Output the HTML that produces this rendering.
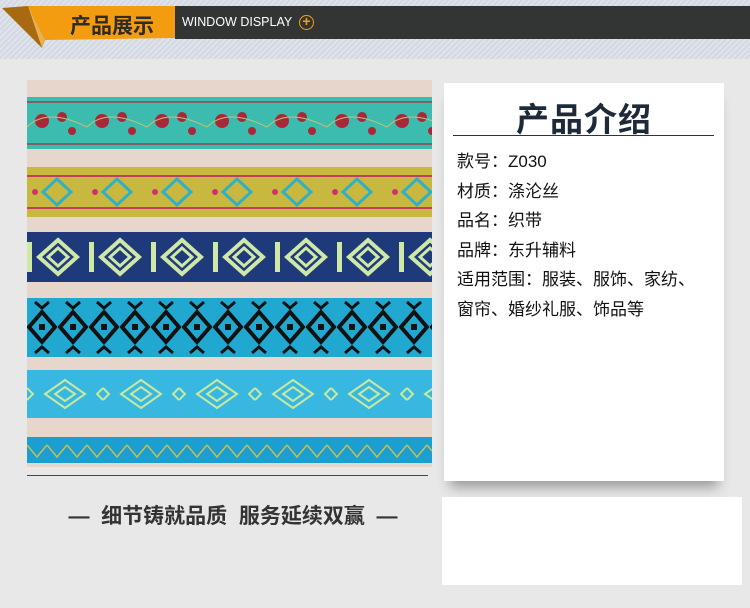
<!DOCTYPE html>
<html><head><meta charset="utf-8"><style>
*{margin:0;padding:0;box-sizing:border-box}
body{width:750px;height:608px;overflow:hidden;background:#e8e8e8;font-family:"Liberation Sans","Noto Sans CJK SC",sans-serif;position:relative}
.top{position:absolute;left:0;top:0;width:750px;height:59px;background:repeating-linear-gradient(135deg,#d3d8e1 0 2px,#dfe3ea 2px 4px)}
.dark{position:absolute;left:175px;top:6px;width:575px;height:33px;background:#333535}
.wd{position:absolute;left:182px;top:15px;color:#fff;font-size:12.5px}
.plus{position:absolute;left:299px;top:15px;width:15px;height:15px;border:1.5px solid #f0a010;border-radius:50%;color:#f0a010;font-size:14px;line-height:11px;text-align:center;font-weight:bold}
.card{position:absolute;left:444px;top:83px;width:280px;height:398px;background:#fff;box-shadow:0 12px 12px -6px rgba(0,0,0,.35)}
.card h1{position:absolute;left:0;width:100%;top:10px;text-align:center;font-size:33px;color:#1e2a3a;font-weight:bold;letter-spacing:1px}
.card .ln{position:absolute;left:9px;top:52px;width:261px;height:1px;background:#333}
.card p{position:absolute;left:13px;top:64px;font-size:17px;line-height:29.5px;color:#111;width:270px;white-space:nowrap}
.box2{position:absolute;left:442px;top:497px;width:300px;height:88px;background:#fff}
.slogan{position:absolute;left:33px;top:500px;width:400px;text-align:center;font-size:21px;font-weight:bold;color:#333;white-space:nowrap}
</style></head><body>
<div class="top"></div>
<div class="dark"></div>
<svg style="position:absolute;left:0;top:0" width="180" height="52">
<polygon points="28,6 175,6 175,38 45,40" fill="#f39c0f"/>
<polygon points="2,8 28,6 45,40 42,48" fill="#a86a10"/>
<polygon points="28,6 45,40 42,48 36,30" fill="#e8b050"/>
<text x="70" y="33" font-size="21" font-weight="bold" fill="#2c2c2c" font-family="Noto Sans CJK SC,sans-serif">产品展示</text>
</svg>
<div class="wd">WINDOW DISPLAY</div>
<div class="plus">+</div>

<svg style="position:absolute;left:27px;top:80px" width="405" height="387">
<defs>
<pattern id="p1" y="17" width="60" height="52" patternUnits="userSpaceOnUse"><rect width="60" height="52" fill="#3cbcae"/><rect y="4" width="60" height="2" fill="#a8283a" opacity=".6"/><rect y="46" width="60" height="2" fill="#a8283a" opacity=".6"/><circle cx="15" cy="24" r="7" fill="#a8283a"/><circle cx="35" cy="20" r="5" fill="#a8283a"/><circle cx="45" cy="34" r="4" fill="#a8283a"/><path d="M0 30 Q20 10 60 30" stroke="#c8c070" fill="none"/></pattern>
<pattern id="p2" y="87" width="60" height="50" patternUnits="userSpaceOnUse"><rect width="60" height="50" fill="#c8b840"/><rect y="8" width="60" height="2" fill="#c04060"/><rect y="40" width="60" height="2" fill="#c04060"/><path d="M30 12 L44 25 L30 38 L16 25Z" fill="none" stroke="#30b0c8" stroke-width="3"/><circle cx="8" cy="25" r="3" fill="#d03070"/></pattern>
<pattern id="p3" y="152" width="62" height="50" patternUnits="userSpaceOnUse"><rect width="62" height="50" fill="#1f3a7a"/><path d="M31 8 L50 25 L31 42 L12 25Z" fill="none" stroke="#cfe8a8" stroke-width="4"/><path d="M31 16 L41 25 L31 34 L21 25Z" fill="none" stroke="#cfe8a8" stroke-width="3"/><rect x="0" y="10" width="5" height="30" fill="#cfe8a8"/></pattern>
<pattern id="p4" y="218" width="31" height="59" patternUnits="userSpaceOnUse"><rect width="31" height="59" fill="#20a8d0"/><path d="M15 14 L28 29 L15 44 L2 29Z" fill="none" stroke="#111" stroke-width="4"/><rect x="12" y="26" width="6" height="6" fill="#111"/><path d="M8 4 L15 10 L22 4" stroke="#111" stroke-width="3" fill="none"/><path d="M8 55 L15 49 L22 55" stroke="#111" stroke-width="3" fill="none"/></pattern>
<pattern id="p5" y="290" width="76" height="48" patternUnits="userSpaceOnUse"><rect width="76" height="48" fill="#38b8e0"/><path d="M38 10 L58 24 L38 38 L18 24Z" fill="none" stroke="#c8e8a0" stroke-width="2"/><path d="M38 17 L48 24 L38 31 L28 24Z" fill="none" stroke="#c8e8a0" stroke-width="2"/><path d="M0 18 L6 24 L0 30 M76 18 L70 24 L76 30" stroke="#c8e8a0" stroke-width="2" fill="none"/></pattern>
<pattern id="p6" y="357" width="20" height="26" patternUnits="userSpaceOnUse"><rect width="20" height="26" fill="#1c9ed0"/><path d="M0 8 L10 20 L20 8" stroke="#c8c050" stroke-width="1.5" fill="none"/></pattern>
</defs>
<rect width="405" height="387" fill="#e6d6cc"/>
<rect y="17" width="405" height="52" fill="url(#p1)"/>
<rect y="87" width="405" height="50" fill="url(#p2)"/>
<rect y="152" width="405" height="50" fill="url(#p3)"/>
<rect y="218" width="405" height="59" fill="url(#p4)"/>
<rect y="290" width="405" height="48" fill="url(#p5)"/>
<rect y="357" width="405" height="26" fill="url(#p6)"/>
</svg>
<div style="position:absolute;left:27px;top:475px;width:401px;height:1px;background:#444"></div>
<div class="slogan">— &nbsp;细节铸就品质&nbsp; 服务延续双赢 &nbsp;—</div>

<div class="card">
<h1>产品介绍</h1>
<div class="ln"></div>
<p>款号：Z030<br>材质：涤沦丝<br>品名：织带<br>品牌：东升辅料<br>适用范围：服装、服饰、家纺、<br>窗帘、婚纱礼服、饰品等</p>
</div>
<div class="box2"></div>
</body></html>
